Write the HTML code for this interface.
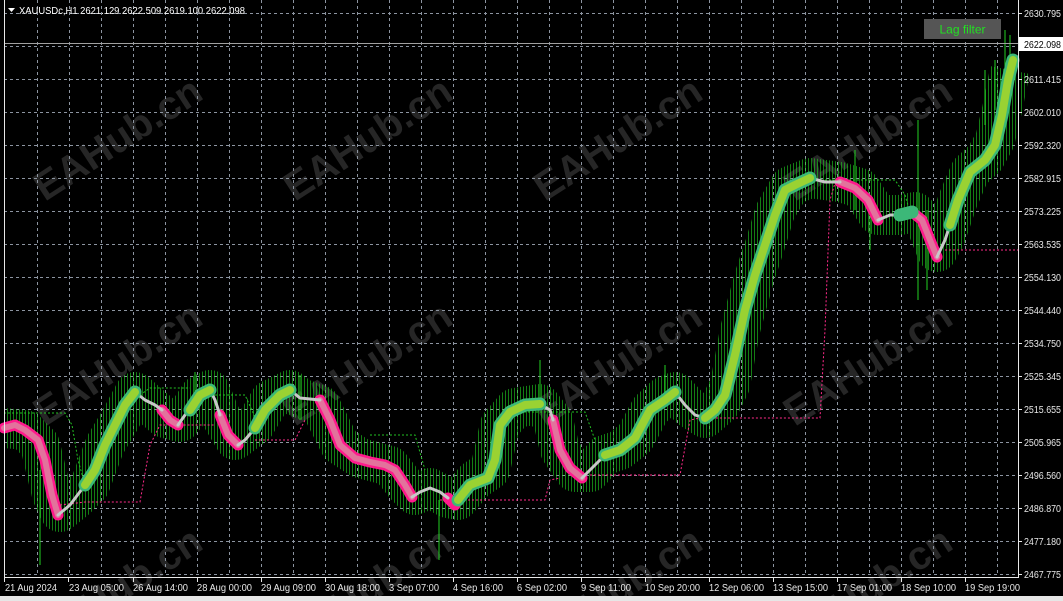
<!DOCTYPE html>
<html><head><meta charset="utf-8"><style>
html,body{margin:0;padding:0;background:#000;width:1063px;height:601px;overflow:hidden}
svg{display:block}
text{font-family:"Liberation Sans",sans-serif}
</style></head><body>
<svg width="1063" height="601" viewBox="0 0 1063 601" xmlns="http://www.w3.org/2000/svg">
<defs>
<pattern id="vl" width="3" height="10" patternUnits="userSpaceOnUse">
<rect x="1" y="0" width="1" height="10" fill="#22d022"/>
</pattern>
<mask id="bm" maskUnits="userSpaceOnUse" x="0" y="0" width="1063" height="601">
<rect width="1063" height="601" fill="#000"/>
<path fill="none" stroke="#fff" stroke-width="40" stroke-linejoin="round" d="M4 428 L25 430 L40 445 L52 495 L60 512 L75 500 L90 485 L105 445 L120 420 L135 392 L150 405 L165 418 L180 422 L190 410 L200 395 L210 390 L220 415 L235 440 L255 425 L270 400 L290 390 L300 398 L320 405 L340 445 L360 458 L390 466 L405 485 L415 495 L430 488 L448 498 L458 500 L475 480 L490 470 L500 425 L515 408 L540 404 L553 420 L560 450 L575 472 L590 472 L605 455 L620 450 L635 438 L650 410 L665 396 L675 392 L690 408 L705 418 L720 405 L730 385 L740 330 L755 275 L765 245 L775 212 L790 186 L810 178 L840 182 L860 188 L878 215 L900 215 L915 212 L925 222 L937 252 L945 238 L958 200 L970 172 L985 158 L995 140 L1002 110 L1010 70"/>
</mask>
</defs>
<rect width="1063" height="601" fill="#000"/>
<g font-size="40" font-weight="bold" fill="#262626">
<text transform="translate(125,150) rotate(-33)" text-anchor="middle">EAHub.cn</text>
<text transform="translate(375,150) rotate(-33)" text-anchor="middle">EAHub.cn</text>
<text transform="translate(625,150) rotate(-33)" text-anchor="middle">EAHub.cn</text>
<text transform="translate(875,150) rotate(-33)" text-anchor="middle">EAHub.cn</text>
<text transform="translate(125,375) rotate(-33)" text-anchor="middle">EAHub.cn</text>
<text transform="translate(375,375) rotate(-33)" text-anchor="middle">EAHub.cn</text>
<text transform="translate(625,375) rotate(-33)" text-anchor="middle">EAHub.cn</text>
<text transform="translate(875,375) rotate(-33)" text-anchor="middle">EAHub.cn</text>
<text transform="translate(125,600) rotate(-33)" text-anchor="middle">EAHub.cn</text>
<text transform="translate(375,600) rotate(-33)" text-anchor="middle">EAHub.cn</text>
<text transform="translate(625,600) rotate(-33)" text-anchor="middle">EAHub.cn</text>
<text transform="translate(875,600) rotate(-33)" text-anchor="middle">EAHub.cn</text>
</g>
<g stroke="#8c94a0" stroke-width="1" stroke-dasharray="3,3" fill="none">
<path d="M37.5 0V576M69.5 0V576M101.5 0V576M133.5 0V576M165.5 0V576M197.5 0V576M229.5 0V576M261.5 0V576M293.5 0V576M325.5 0V576M357.5 0V576M389.5 0V576M421.5 0V576M453.5 0V576M485.5 0V576M517.5 0V576M549.5 0V576M581.5 0V576M613.5 0V576M645.5 0V576M677.5 0V576M709.5 0V576M741.5 0V576M773.5 0V576M805.5 0V576M837.5 0V576M869.5 0V576M901.5 0V576M933.5 0V576M965.5 0V576M997.5 0V576"/>
<path d="M4 13.5H1018M4 46.5H1018M4 79.5H1018M4 112.5H1018M4 145.5H1018M4 178.5H1018M4 211.5H1018M4 244.5H1018M4 277.5H1018M4 310.5H1018M4 343.5H1018M4 376.5H1018M4 409.5H1018M4 442.5H1018M4 475.5H1018M4 508.5H1018M4 541.5H1018M4 574.5H1018"/>
</g>
<rect width="1063" height="601" fill="url(#vl)" mask="url(#bm)" opacity="0.6"/>
<g stroke="#22d022" stroke-width="1">
<path d="M40 470V565M439 500V560M918 120V300M665 365V400M540 360V400M300 375V420M195 372V395M1005 30V75M1010 35V70M995 60V110M985 70V125M855 150V210M870 200V250M927 210V290"/>
</g>
<g fill="none" stroke-width="1" stroke-dasharray="2,2">
<path stroke="#22c022" d="M4 413H65L72 425L78 460L85 485M140 395L150 388H190M215 395H245L260 428M370 435H415L425 470M520 412H585L595 440M825 180H895L905 195L910 212M655 400L665 395"/>
<path stroke="#ff2a8a" d="M60 505L85 502H140L150 445L160 425H215M255 440H295L305 420M440 500H545L550 480L560 478M590 475H680L690 420L700 418H820L825 330L830 200L835 183M945 250H1018"/>
</g>
<g fill="none" stroke-linecap="round" stroke-linejoin="round">
<g stroke="#ff1a8c" stroke-width="11">
<path d="M4 428L15 425L25 430L38 440L45 460L52 495L58 515"/>
<path d="M162 410L170 420L178 425"/>
<path d="M220 415L228 435L238 445"/>
<path d="M320 400L330 420L340 445L355 458L370 462L385 465L395 470L405 485L412 497"/>
<path d="M448 498L455 505"/>
<path d="M553 420L560 450L570 468L582 478"/>
<path d="M840 182L855 188L868 200L878 220"/>
<path d="M912 212L922 220L930 240L937 257"/>
</g>
<g stroke="#e2739c" stroke-width="6">
<path d="M4 428L15 425L25 430L38 440L45 460L52 495L58 515"/>
<path d="M162 410L170 420L178 425"/>
<path d="M220 415L228 435L238 445"/>
<path d="M320 400L330 420L340 445L355 458L370 462L385 465L395 470L405 485L412 497"/>
<path d="M553 420L560 450L570 468L582 478"/>
<path d="M840 182L855 188L868 200L878 220"/>
<path d="M912 212L922 220L930 240L937 257"/>
</g>
<g stroke="#c8c8c8" stroke-width="3">
<path d="M58 515L70 505L85 485"/>
<path d="M135 392L145 400L155 405L162 410"/>
<path d="M178 425L185 415L190 410"/>
<path d="M210 390L215 400L220 415"/>
<path d="M238 445L245 440L255 428"/>
<path d="M290 390L300 398L320 400"/>
<path d="M412 497L420 492L430 488L440 492L448 498"/>
<path d="M540 404L550 410L553 420"/>
<path d="M582 478L595 465L605 455"/>
<path d="M675 392L685 405L695 415L705 418"/>
<path d="M810 178L825 182L840 182"/>
<path d="M878 220L890 215L900 215"/>
<path d="M937 257L945 240L950 225"/>
</g>
<g stroke="#3cb878" stroke-width="13">
<path d="M85 485L95 470L105 445L115 425L125 405L135 392"/>
<path d="M190 410L200 395L210 390"/>
<path d="M255 428L265 410L280 395L290 390"/>
<path d="M458 500L470 485L488 478L495 460L500 425L510 412L525 405L540 404"/>
<path d="M605 455L620 450L635 438L650 410L665 400L675 392"/>
<path d="M705 418L715 410L725 395L735 355L745 310L755 275L765 245L775 215L785 190L795 185L810 178"/>
<path d="M900 215L912 212"/>
<path d="M950 225L958 200L970 172L985 160L995 145L1002 115L1008 80L1013 60"/>
</g>
<g stroke="#9ad232" stroke-width="8">
<path d="M85 485L95 470L105 445L115 425L125 405L135 392"/>
<path d="M190 410L200 395L210 390"/>
<path d="M255 428L265 410L280 395L290 390"/>
<path d="M458 500L470 485L488 478L495 460L500 425L510 412L525 405L540 404"/>
<path d="M605 455L620 450L635 438L650 410L665 400L675 392"/>
<path d="M705 418L715 410L725 395L735 355L745 310L755 275L765 245L775 215L785 190L795 185L810 178"/>
<path d="M950 225L958 200L970 172L985 160L995 145L1002 115L1008 80L1013 60"/>
</g>
</g>
<line x1="4" y1="43.5" x2="1018" y2="43.5" stroke="#a0a0a0" stroke-width="1"/>
<path d="M4.5 0V577.5H1018.5V0" fill="none" stroke="#e8e8e8" stroke-width="1"/>
<g stroke="#e8e8e8"><path d="M1018 13.5h4M1018 79.5h4M1018 112.5h4M1018 145.5h4M1018 178.5h4M1018 211.5h4M1018 244.5h4M1018 277.5h4M1018 310.5h4M1018 343.5h4M1018 376.5h4M1018 409.5h4M1018 442.5h4M1018 475.5h4M1018 508.5h4M1018 541.5h4M1018 574.5h4"/>
<path d="M4.5 577v5M68.5 577v5M133.5 577v5M197.5 577v5M261.5 577v5M325.5 577v5M389.5 577v5M453.5 577v5M517.5 577v5M581.5 577v5M645.5 577v5M709.5 577v5M773.5 577v5M837.5 577v5M901.5 577v5M965.5 577v5"/></g>
<g font-size="10" fill="#e8e8e8">
<text x="1024" y="17" textLength="37" lengthAdjust="spacingAndGlyphs">2630.795</text>
<text x="1024" y="83" textLength="37" lengthAdjust="spacingAndGlyphs">2611.415</text>
<text x="1024" y="116" textLength="37" lengthAdjust="spacingAndGlyphs">2602.010</text>
<text x="1024" y="149" textLength="37" lengthAdjust="spacingAndGlyphs">2592.320</text>
<text x="1024" y="182" textLength="37" lengthAdjust="spacingAndGlyphs">2582.915</text>
<text x="1024" y="215" textLength="37" lengthAdjust="spacingAndGlyphs">2573.225</text>
<text x="1024" y="248" textLength="37" lengthAdjust="spacingAndGlyphs">2563.535</text>
<text x="1024" y="281" textLength="37" lengthAdjust="spacingAndGlyphs">2554.130</text>
<text x="1024" y="314" textLength="37" lengthAdjust="spacingAndGlyphs">2544.440</text>
<text x="1024" y="347" textLength="37" lengthAdjust="spacingAndGlyphs">2534.750</text>
<text x="1024" y="380" textLength="37" lengthAdjust="spacingAndGlyphs">2525.345</text>
<text x="1024" y="413" textLength="37" lengthAdjust="spacingAndGlyphs">2515.655</text>
<text x="1024" y="446" textLength="37" lengthAdjust="spacingAndGlyphs">2505.965</text>
<text x="1024" y="479" textLength="37" lengthAdjust="spacingAndGlyphs">2496.560</text>
<text x="1024" y="512" textLength="37" lengthAdjust="spacingAndGlyphs">2486.870</text>
<text x="1024" y="545" textLength="37" lengthAdjust="spacingAndGlyphs">2477.180</text>
<text x="1024" y="578" textLength="37" lengthAdjust="spacingAndGlyphs">2467.775</text>
</g>
<rect x="1019" y="37" width="44" height="14" fill="#fff"/>
<text x="1024" y="48" font-size="10" fill="#000" textLength="37" lengthAdjust="spacingAndGlyphs">2622.098</text>
<g font-size="10" fill="#e8e8e8">
<text x="5" y="591" textLength="52" lengthAdjust="spacingAndGlyphs">21 Aug 2024</text>
<text x="69" y="591" textLength="55" lengthAdjust="spacingAndGlyphs">23 Aug 05:00</text>
<text x="133" y="591" textLength="55" lengthAdjust="spacingAndGlyphs">26 Aug 14:00</text>
<text x="197" y="591" textLength="55" lengthAdjust="spacingAndGlyphs">28 Aug 00:00</text>
<text x="261" y="591" textLength="55" lengthAdjust="spacingAndGlyphs">29 Aug 09:00</text>
<text x="325" y="591" textLength="55" lengthAdjust="spacingAndGlyphs">30 Aug 18:00</text>
<text x="389" y="591" textLength="50" lengthAdjust="spacingAndGlyphs">3 Sep 07:00</text>
<text x="453" y="591" textLength="50" lengthAdjust="spacingAndGlyphs">4 Sep 16:00</text>
<text x="517" y="591" textLength="50" lengthAdjust="spacingAndGlyphs">6 Sep 02:00</text>
<text x="581" y="591" textLength="50" lengthAdjust="spacingAndGlyphs">9 Sep 11:00</text>
<text x="645" y="591" textLength="55" lengthAdjust="spacingAndGlyphs">10 Sep 20:00</text>
<text x="709" y="591" textLength="55" lengthAdjust="spacingAndGlyphs">12 Sep 06:00</text>
<text x="773" y="591" textLength="55" lengthAdjust="spacingAndGlyphs">13 Sep 15:00</text>
<text x="837" y="591" textLength="55" lengthAdjust="spacingAndGlyphs">17 Sep 01:00</text>
<text x="901" y="591" textLength="55" lengthAdjust="spacingAndGlyphs">18 Sep 10:00</text>
<text x="965" y="591" textLength="55" lengthAdjust="spacingAndGlyphs">19 Sep 19:00</text>
</g>
<rect x="0" y="596" width="1063" height="5" fill="#e6e6e6"/>
<path d="M8 8h7l-3.5 4z" fill="#fff"/>
<text x="19" y="14" font-size="10" fill="#fff" textLength="226" lengthAdjust="spacingAndGlyphs">XAUUSDc,H1  2621.129 2622.509 2619.100 2622.098</text>
<rect x="924" y="19" width="77" height="20" fill="#555"/>
<text x="962.5" y="33.5" font-size="12" fill="#22e022" text-anchor="middle">Lag filter</text>
</svg>
</body></html>
